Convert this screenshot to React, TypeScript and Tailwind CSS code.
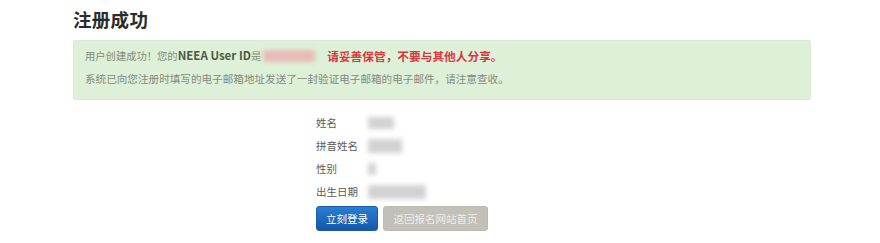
import React from 'react';

const rows = [
  { label: '姓名', w: 'w-[26px]', h: 'h-[12px]' },
  { label: '拼音姓名', w: 'w-[34px]', h: 'h-[14px]' },
  { label: '性别', w: 'w-[8px]', h: 'h-[12px]' },
  { label: '出生日期', w: 'w-[58px]', h: 'h-[14px]' },
];

const App: React.FC = () => {
  return (
    <div
      className="w-[880px] h-[243px] bg-white text-[#333] overflow-hidden"
      style={{ fontFamily: '"Noto Sans CJK SC", "Liberation Sans", sans-serif' }}
    >
      <div className="pl-[73px] pr-[69px] pt-[5px]">
        <h1 className="text-[18.5px] font-bold leading-[28px] text-[#2b2b2b] tracking-[0.3px]">注册成功</h1>

        <div className="mt-[7px] h-[60px] bg-[#dff0d8] border border-[#d9ecd1] rounded-[2px] px-[11px] pt-[6px]">
          <div className="flex items-center h-[18px] text-[10.3px] text-[#7f8c7a]">
            <span>用户创建成功！您的</span>
            <span className="font-bold text-[11.5px] text-[#4a5a45]">NEEA User ID</span>
            <span>是</span>
            <span className="ml-[2px] w-[52px] h-[12px] bg-[#e7bcb8] blur-[2px] rounded-[2px]" />
            <span className="ml-[12px] text-[11.7px] font-bold text-[#d9363e]">请妥善保管，不要与其他人分享。</span>
          </div>
          <div className="mt-[5px] h-[18px] flex items-center text-[10.6px] text-[#7f8c7a]">
            系统已向您注册时填写的电子邮箱地址发送了一封验证电子邮箱的电子邮件，请注意查收。
          </div>
        </div>

        <div className="ml-[243px] mt-[11px] flex flex-col">
          {rows.map((r) => (
            <div key={r.label} className="flex items-center h-[23px] text-[10.5px] text-[#5a5a5a]">
              <span className="w-[52px]">{r.label}</span>
              <span className={`${r.w} ${r.h} bg-[#d2d2d2] blur-[2.5px]`} />
            </div>
          ))}
          <div className="flex gap-[5px] mt-[3px]">
            <button className="h-[25px] w-[62px] rounded-[3px] bg-gradient-to-b from-[#2a7fd4] to-[#1556a8] border border-[#1a5aa3] text-white text-[10.5px]">
              立刻登录
            </button>
            <button className="h-[25px] w-[105px] rounded-[3px] bg-[#c3c0ba] border border-[#bdbab4] text-[#eeece8] text-[10.5px]">
              返回报名网站首页
            </button>
          </div>
        </div>
      </div>
    </div>
  );
};

export default App;
